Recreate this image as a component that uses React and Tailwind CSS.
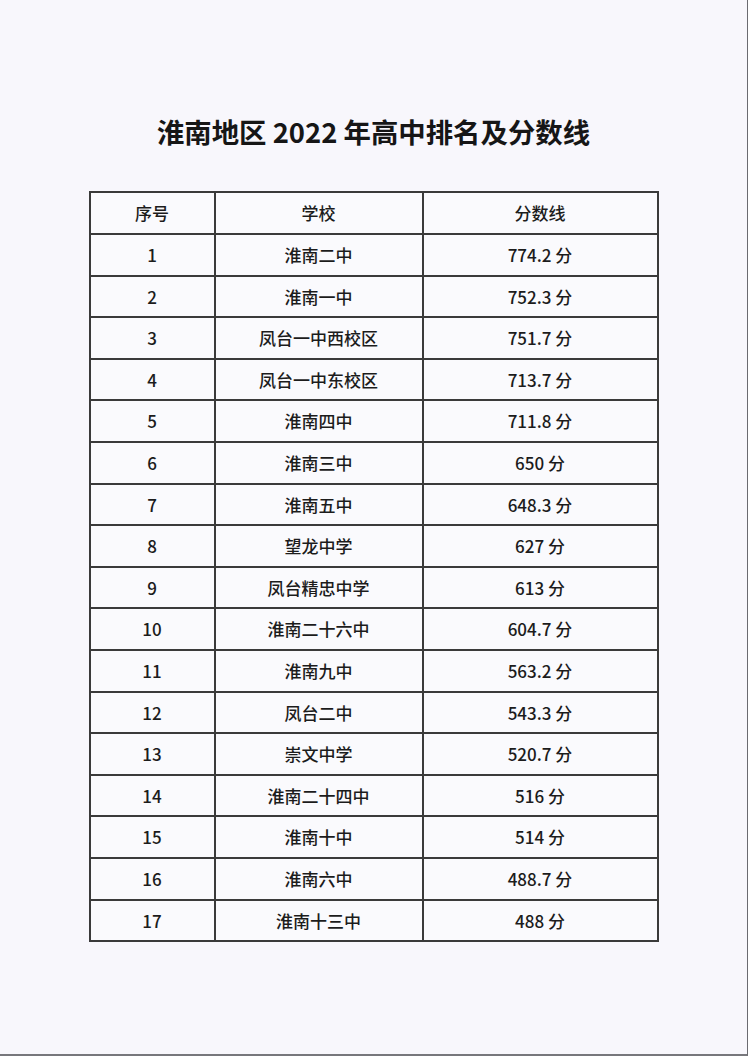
import React from "react";

const rows = [
  ["1", "淮南二中", "774.2 分"],
  ["2", "淮南一中", "752.3 分"],
  ["3", "凤台一中西校区", "751.7 分"],
  ["4", "凤台一中东校区", "713.7 分"],
  ["5", "淮南四中", "711.8 分"],
  ["6", "淮南三中", "650 分"],
  ["7", "淮南五中", "648.3 分"],
  ["8", "望龙中学", "627 分"],
  ["9", "凤台精忠中学", "613 分"],
  ["10", "淮南二十六中", "604.7 分"],
  ["11", "淮南九中", "563.2 分"],
  ["12", "凤台二中", "543.3 分"],
  ["13", "崇文中学", "520.7 分"],
  ["14", "淮南二十四中", "516 分"],
  ["15", "淮南十中", "514 分"],
  ["16", "淮南六中", "488.7 分"],
  ["17", "淮南十三中", "488 分"],
];

export default function App() {
  return (
    <div
      className="w-[748px] h-[1056px] bg-[#f8f7fc] text-[#1c1c1c] border-r border-b-2 border-r-[#6b6b70] border-b-[#77777c] overflow-hidden"
      style={{ fontFamily: '"Noto Sans CJK SC", "Noto Sans", sans-serif' }}
    >
      <div className="pt-[110px] flex flex-col items-center">
        <h1 className="h-[42px] leading-[42px] text-[27.4px] font-bold text-[#161616]">
          淮南地区 2022 年高中排名及分数线
        </h1>
        <div className="mt-[39px] w-[570px] border-2 border-[#3a3a3a] bg-[#fafafd]">
          <div className="grid grid-cols-[123px_208px_1fr] h-[40px] text-[17px] font-medium">
            <div className="flex items-center justify-center">序号</div>
            <div className="flex items-center justify-center border-l-2 border-[#3a3a3a]">学校</div>
            <div className="flex items-center justify-center border-l-2 border-[#3a3a3a]">分数线</div>
          </div>
          {rows.map((r) => (
            <div
              key={r[0]}
              className="grid grid-cols-[123px_208px_1fr] h-[41.6px] border-t-2 border-[#3a3a3a] text-[17px] font-medium"
            >
              <div className="flex items-center justify-center">{r[0]}</div>
              <div className="flex items-center justify-center border-l-2 border-[#3a3a3a]">{r[1]}</div>
              <div className="flex items-center justify-center border-l-2 border-[#3a3a3a]">{r[2]}</div>
            </div>
          ))}
        </div>
      </div>
    </div>
  );
}
